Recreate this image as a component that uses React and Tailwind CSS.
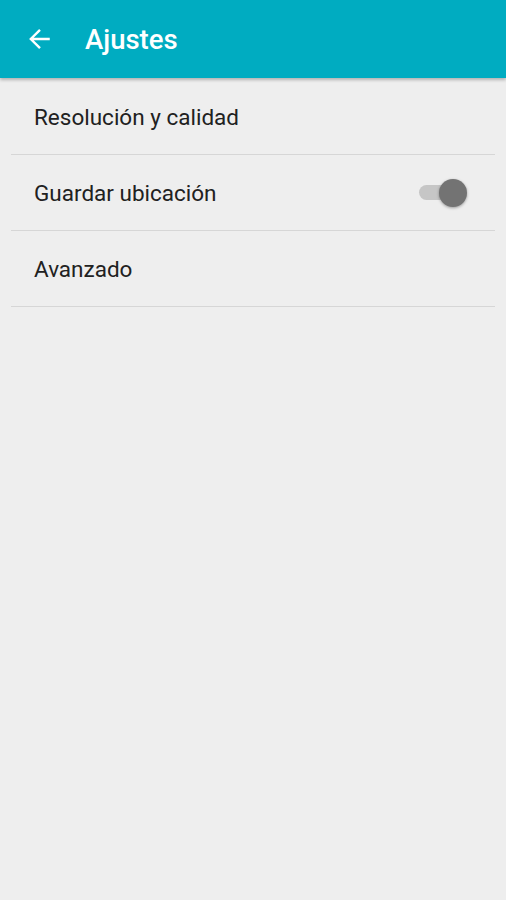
export default function App() {
  const rows = ["Resolución y calidad", "Guardar ubicación", "Avanzado"];
  return (
    <div className="w-[506px] h-[900px] bg-[#eeeeee] flex flex-col" style={{ fontFamily: "Roboto, 'Noto Sans', sans-serif" }}>
      <div className="h-[78px] bg-[#00acc1] flex items-center shadow-[0_2px_3px_rgba(0,0,0,0.25)] relative z-10">
        <div className="w-[85px] flex items-center pl-[27px]">
          <svg width="26" height="26" viewBox="0 0 24 24" fill="none" stroke="white" strokeWidth="2.2">
            <path d="M21 12H3.5M12 3.5L3.5 12l8.5 8.5" />
          </svg>
        </div>
        <span className="text-white text-[27.5px] font-medium leading-none mt-[2px]">Ajustes</span>
      </div>
      <div className="px-[11px] pt-[1px]">
        {rows.map((r, i) => (
          <div key={r} className="h-[76px] border-b border-[#d6d6d6] flex items-center justify-between pl-[23px] pr-[28px]">
            <span className="text-[22.5px] text-[#212121] mt-[2px]">{r}</span>
            {i === 1 && (
              <div className="relative w-[48px] h-[30px] flex items-center">
                <div className="w-[40px] h-[15px] rounded-full bg-[#c6c6c6]" />
                <div className="absolute right-0 top-[1px] w-[28px] h-[28px] rounded-full bg-[#737373] shadow-[0_1px_3px_rgba(0,0,0,0.35)]" />
              </div>
            )}
          </div>
        ))}
      </div>
    </div>
  );
}
